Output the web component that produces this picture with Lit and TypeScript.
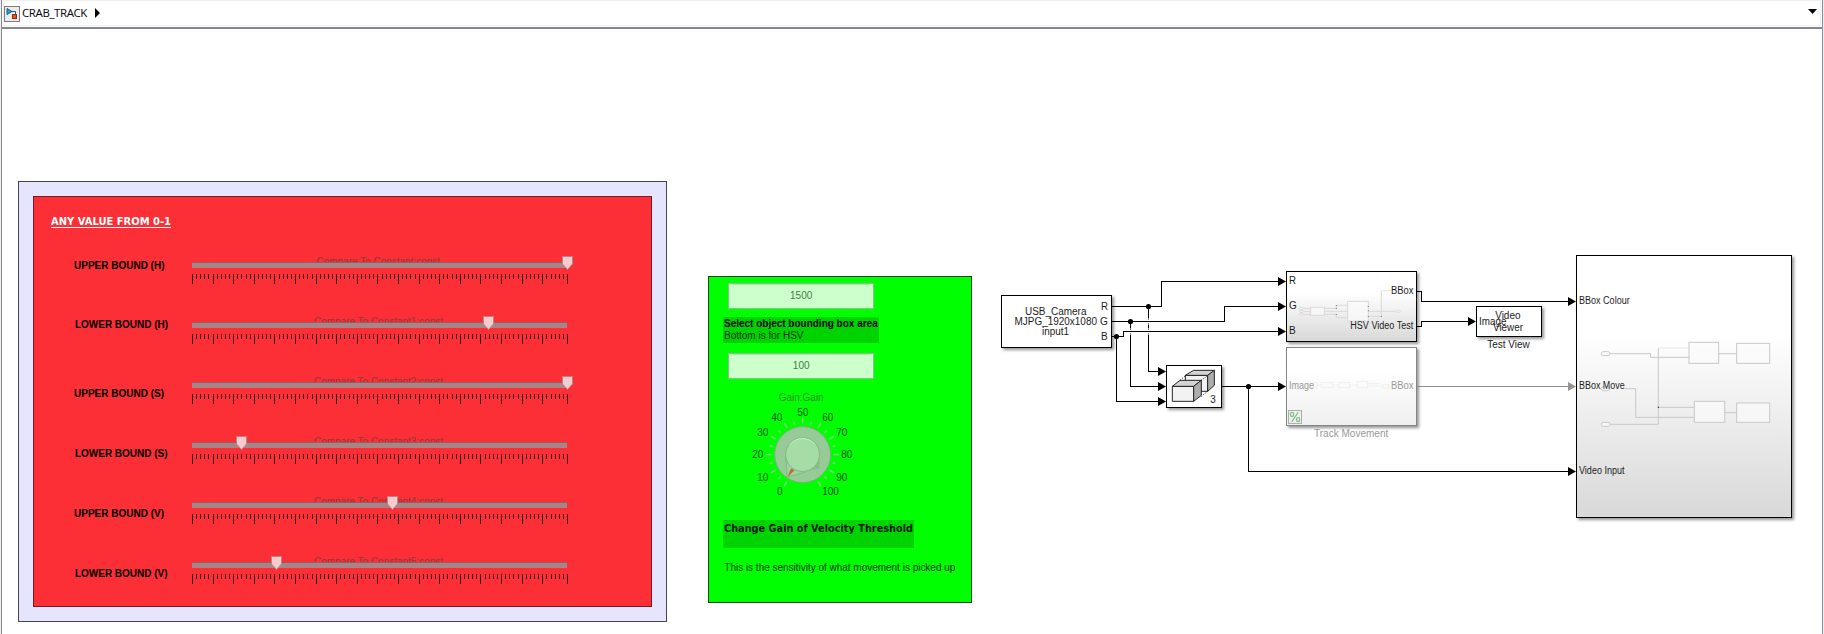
import { LitElement, html, svg, css } from "lit";
import { customElement } from "lit/decorators.js";

interface SliderSpec {
  label: string;
  labelX: number;
  labelW: number;
  labelY: number;
  param: string;
  paramX: number;
  paramW: number;
  thumb: number;
}

const SLIDERS: SliderSpec[] = [
  { label: "UPPER BOUND (H)", labelX: 74, labelW: 90.5, labelY: 269, param: "Compare To Constant:const", paramX: 316.5, paramW: 123.5, thumb: 567.5 },
  { label: "LOWER BOUND (H)", labelX: 75, labelW: 93, labelY: 328, param: "Compare To Constant1:const", paramX: 314, paramW: 129, thumb: 488.5 },
  { label: "UPPER BOUND (S)", labelX: 74, labelW: 90, labelY: 397, param: "Compare To Constant2:const", paramX: 314, paramW: 129, thumb: 567.5 },
  { label: "LOWER BOUND (S)", labelX: 75, labelW: 92.5, labelY: 457, param: "Compare To Constant3:const", paramX: 314, paramW: 129, thumb: 241.5 },
  { label: "UPPER BOUND (V)", labelX: 74, labelW: 90, labelY: 517, param: "Compare To Constant4:const", paramX: 314, paramW: 129, thumb: 392.5 },
  { label: "LOWER BOUND (V)", labelX: 75, labelW: 92.5, labelY: 577, param: "Compare To Constant5:const", paramX: 314, paramW: 129, thumb: 276.5 },
];

/* Knob scale captions: value and centre point on the canvas. */
const KNOB_LABELS: [string, number, number][] = [
  ["0", 779.7, 491.7], ["10", 762.7, 477.7], ["20", 757.7, 454.7], ["30", 762.7, 432.7],
  ["40", 776.7, 417.7], ["50", 802.7, 412.7], ["60", 827.7, 417.7], ["70", 841.7, 432.7],
  ["80", 846.7, 454.7], ["90", 841.7, 477.7], ["100", 830.5, 491.7],
];

const TICKS = Array.from({ length: 92 }, (_, i) => ({
  x: 192 + Math.round((i * 375) / 91),
  long: (i % 5 === 0 && i < 90) || i === 91,
}));

const text = (s: string, x: number, y: number, w: number, cls = "") =>
  svg`<text class=${cls} x=${x} y=${y} textLength=${w} lengthAdjust="spacingAndGlyphs">${s}</text>`;

const arrow = (tip: number, y: number, cls = "head") =>
  svg`<path class=${cls} d="M${tip - 8} ${y - 4.5}L${tip} ${y}L${tip - 8} ${y + 4.5}Z" />`;

@customElement("model-canvas")
export class ModelCanvas extends LitElement {
  static styles = css`
    :host { display: block; }
    svg { display: block; }
    text { font-family: "Liberation Sans", Arial, sans-serif; font-size: 10px; fill: #1c1c1c; }
    .bold { font-weight: 700; fill: #000; }
    .title { font: 700 11px "DejaVu Sans", sans-serif; fill: #fff; }
    .heading { font: 700 11px "DejaVu Sans", sans-serif; fill: #001800; }
    .param { fill: #8d393e; }
    .value { fill: #467c46; text-anchor: middle; }
    .gain { fill: #2c8f2c; }
    .scale { fill: #045204; text-anchor: middle; }
    .note { fill: #003000; }
    .dim { fill: #999; }
    .wire { fill: none; stroke: #000; stroke-width: 1; }
    .wire-dim { fill: none; stroke: #8c8c8c; stroke-width: 1; }
    .head { fill: #000; }
    .head-dim { fill: #949494; }
    .block { fill: #fff; stroke: #000; filter: url(#shadow); }
    .mini { fill: none; stroke: #c8c8c8; stroke-width: 3; }
    .mini-box { fill: #fbfbfb; fill-opacity: 0.7; }
    .light { stroke: #d9d9d9; }
    .faint { stroke: #e6e6e6; }
    .ghost { stroke: #efefef; }
    .cube { stroke: #222; stroke-width: 3; stroke-linejoin: round; }
    .dots { stroke: #111; stroke-width: 3; stroke-dasharray: 3 5; fill: none; }
    .crisp { shape-rendering: crispEdges; }
    .knob-tick { stroke: #8cc88c; stroke-width: 1.4; }
  `;

  private slider(s: SliderSpec, i: number) {
    const dy = i * 60;
    const t = s.thumb;
    return svg`
      ${text(s.label, s.labelX, s.labelY, s.labelW, "bold")}
      <g transform="translate(0 ${dy})">
        ${text(s.param, s.paramX, 265, s.paramW, "param")}
        <g class="crisp">
          <rect x="192" y="262" width="375" height="6" fill="#ab8384" />
          <rect x="192" y="262" width="375" height="1" fill="#8b6265" />
          ${TICKS.map((k) => svg`<rect x=${k.x} y="274" width="1" height=${k.long ? 10 : 5} fill="#300a0c" />`)}
        </g>
        <path d="M${t - 5} 256.5H${t + 5}V264L${t} 269.5L${t - 5} 264Z" fill="#f6cbce" stroke="#b68587" />
      </g>`;
  }

  private knob() {
    const cx = 802.6, cy = 454.6;
    return svg`
      ${Array.from({ length: 21 }, (_, i) => svg`
        <line class="knob-tick" x1=${cx} x2=${cx} y1=${cy - 31} y2=${cy - (i % 2 ? 34 : 36.5)}
          transform="rotate(${i * 15 - 150} ${cx} ${cy})" />`)}
      <circle cx=${cx} cy=${cy} r="28" fill="#96ca96" stroke="#7db07d" />
      <path d="M786 456L787.3 477L819.5 468V455Z" fill="url(#knobShade)" />
      <path d="M785.8 456L787.2 477.2L806 471.8" fill="#9fd29f" stroke="#7fb37f" stroke-width="0.8" />
      <circle cx=${cx} cy=${cy} r="16.9" fill="#a6dca6" stroke="#7fb87f" stroke-width="0.9" />
      <path d="M790 444.5A16 16 0 0 1 815 444.5" fill="none" stroke="#c2f2c2" />
      <path d="M787.2 477.4L791 468.4L794.6 470Z" fill="#bd6a35" />
      ${KNOB_LABELS.map(([s, x, y]) => svg`<text class="scale" x=${x} y=${y + 3.5}>${s}</text>`)}`;
  }

  private wires() {
    return svg`
      <g class="crisp">
        <path class="wire" d="M1112 306.5H1161.5V281.5H1279M1112 321.5H1224.5V306.5H1279M1112 336.5H1123.5V331.5H1279" />
        <path class="wire" d="M1148.5 306.5V318M1148.5 325V328M1148.5 335V371.5H1159M1130.5 321.5V328M1130.5 335V386.5H1159M1116.5 336.5V401.5H1159" />
        <path class="wire" d="M1222 386.5H1279M1248.5 386.5V471.5H1569" />
        <path class="wire" d="M1417 291.5H1421.5V301.5H1569M1417 326.5H1421.5V321.5H1469" />
        <path class="wire-dim" d="M1417 386.5H1569" />
      </g>
      <g class="crisp" stroke="#8a8a8a"><path d="M1148.5 318V320M1148.5 323V325M1148.5 328V330M1148.5 333V335M1130.5 328V330M1130.5 333V335" /></g>
      ${[[1148.5, 306.5], [1130.5, 321.5], [1116.5, 336.5], [1248.5, 386.5]].map(
        ([x, y]) => svg`<circle cx=${x} cy=${y} r="2.6" />`)}
      ${[281.5, 306.5, 331.5, 386.5].map((y) => arrow(1286, y))}
      ${[371.5, 386.5, 401.5].map((y) => arrow(1166, y))}
      ${arrow(1476, 321.5)}
      ${arrow(1576, 301.5)}
      ${arrow(1576, 471.5)}
      ${arrow(1576, 386.5, "head-dim")}`;
  }

  private blocks() {
    return svg`
      <rect class="block" x="1001.5" y="295.5" width="110" height="52" />
      ${text("USB_Camera", 1025, 315, 61.5)}
      ${text("MJPG_1920x1080", 1014.5, 325, 82.5)}
      ${text("input1", 1042, 335, 27)}
      ${text("R", 1101, 310, 7)}
      ${text("G", 1100, 325, 7.8)}
      ${text("B", 1101, 340, 6.7)}

      <rect class="block" x="1166.5" y="365.5" width="55" height="42" />
      <g transform="translate(990 260) scale(0.33333)">
        <path class="cube" fill="#f2f2f2" d="M586 346H653V394H586Z" />
        <path class="cube" fill="#d4d4d4" d="M586 346L611 331H673L653 346Z" />
        <path class="cube" fill="#adadad" d="M653 346L673 331V376L653 394Z" />
        <path class="dots" d="M570 361L586 347M634 361L653 347M634 409L655 392" />
        <path class="cube" fill="#f2f2f2" d="M547 379H611V424H547Z" />
        <path class="cube" fill="#d4d4d4" d="M547 379L570 361H634L611 379Z" />
        <path class="cube" fill="#adadad" d="M611 379L634 361V406L611 424Z" />
      </g>
      ${text("3", 1210.3, 403, 5.5)}

      <rect class="block" x="1286.5" y="271.5" width="130" height="70" style="fill:url(#fade)" />
      <g class="mini light" transform="translate(1270 250) scale(0.33333)">
        <path d="M100 175H122M100 184H122M100 193H122M163 175H199V166H233M163 184H233M163 193H199V203H233M295 184H380M295 199H334V122" />
        <path class="faint" d="M334 122H364" />
        <rect class="mini-box" x="122" y="172" width="41" height="24" />
        <rect class="mini-box" x="233" y="154" width="62" height="59" />
        <rect class="mini-box" x="379" y="181" width="12" height="6" rx="3" />
        <rect class="mini-box" x="88" y="172" width="12" height="6" rx="3" />
        <rect class="mini-box" x="88" y="181" width="12" height="6" rx="3" />
        <rect class="mini-box" x="88" y="190" width="12" height="6" rx="3" />
        <path stroke="#777" d="M199 165V168M199 174V177M199 192V195M295 168V171M295 181V184M295 198V201M334 198V201" />
      </g>
      ${text("R", 1289, 284, 7)}
      ${text("G", 1289, 309, 7.8)}
      ${text("B", 1289, 334, 6.7)}
      ${text("BBox", 1391, 294, 22.5)}
      ${text("HSV Video Test", 1350.3, 329, 63)}

      <rect class="block" x="1476.5" y="306.5" width="65" height="30" />
      ${text("Video", 1495.2, 319, 25.3)}
      ${text("Image", 1479, 325, 27.4)}
      ${text("Viewer", 1493, 331, 30)}
      ${text("Test View", 1487.3, 348, 42.5)}

      <rect class="block" x="1286.5" y="347.5" width="130" height="78" style="fill:url(#fadeDim);stroke:#858585" />
      <g class="mini ghost" transform="translate(1270 250) scale(0.33333)">
        <path d="M143 405H155M188 405H206M239 405H262M293 401H328M293 408H338M356 408H364" />
        <rect x="131" y="398" width="11" height="14" />
        <rect x="155" y="398" width="33" height="15" />
        <rect x="206" y="398" width="33" height="15" />
        <rect x="262" y="395" width="31" height="18" />
        <rect x="338" y="404" width="18" height="10" />
      </g>
      ${text("Image", 1289, 389, 25, "dim")}
      ${text("BBox", 1391, 389, 22.5, "dim")}
      <rect x="1288.5" y="410.5" width="13" height="13" fill="#eaf0ea" stroke="#adadad" />
      <g fill="none" stroke="#7fb57f" stroke-width="1.1">
        <ellipse cx="1292" cy="414.4" rx="1.7" ry="2" />
        <ellipse cx="1298.1" cy="419.6" rx="1.7" ry="2" />
        <path d="M1298.2 412.2L1291.8 421.8" />
      </g>
      ${text("Track Movement", 1314, 437, 74.3, "dim")}

      <rect class="block" x="1576.5" y="255.5" width="215" height="262" style="fill:url(#fade)" />
      <g class="mini" transform="translate(1560 240) scale(0.33333)">
        <path d="M150 341H272V352H387M476 341H530M193 446H227V532H403M494 518H530M150 553H295V325M295 502H403" />
        <path class="faint" d="M295 324H387" />
        <rect class="mini-box" x="387" y="307" width="89" height="63" />
        <rect class="mini-box" x="530" y="310" width="99" height="60" />
        <rect class="mini-box" x="403" y="484" width="91" height="63" />
        <rect class="mini-box" x="530" y="489" width="99" height="58" />
        <rect class="mini-box" x="124" y="335" width="26" height="12" rx="6" />
        <rect class="mini-box" x="124" y="440" width="26" height="12" rx="6" />
        <rect class="mini-box" x="124" y="547" width="26" height="12" rx="6" />
        <path stroke="#222" d="M295 500V504" />
      </g>
      ${text("BBox Colour", 1579, 304, 50.7)}
      ${text("BBox Move", 1579, 389, 45.7)}
      ${text("Video Input", 1579, 474, 45.5)}`;
  }

  render() {
    return html`
      <svg width="1819" height="605" viewBox="2 29 1819 605">
        <defs>
          <filter id="shadow" x="-10%" y="-15%" width="125%" height="135%">
            <feDropShadow dx="2" dy="2" stdDeviation="1.4" flood-color="#000" flood-opacity="0.42" />
          </filter>
          <linearGradient id="fade" x1="0" y1="0" x2="0" y2="1">
            <stop offset="0.3" stop-color="#fff" /><stop offset="1" stop-color="#d8d8d8" />
          </linearGradient>
          <linearGradient id="fadeDim" x1="0" y1="0" x2="0" y2="1">
            <stop offset="0.3" stop-color="#fff" /><stop offset="1" stop-color="#efefef" />
          </linearGradient>
          <linearGradient id="knobShade" x1="0" y1="0" x2="1" y2="0.3">
            <stop offset="0" stop-color="#a2d4a2" /><stop offset="1" stop-color="#8bbd8b" />
          </linearGradient>
        </defs>

        <rect x="18.5" y="181.5" width="648" height="440" fill="#e5e5ff" stroke="#45454d" />
        <rect x="33.5" y="196.5" width="618" height="410" fill="#fb2f35" stroke="#761a1f" />
        ${text("ANY VALUE FROM 0-1", 51, 225, 120, "title")}
        <rect class="crisp" x="51" y="227" width="120" height="1" fill="#fff" />
        ${SLIDERS.map((s, i) => this.slider(s, i))}

        <rect x="708.5" y="276.5" width="263" height="326" fill="#0f0" stroke="#004d00" />
        ${[283.5, 353.5].map((y) => svg`
          <rect x="728.5" y=${y} width="145" height="25" fill="#ccffcc" stroke="#86c486" />
          <rect class="crisp" x="733" y=${y + 0.5} width="136" height="1" fill="#aee2ae" />`)}
        <text class="value" x="801.2" y="299">1500</text>
        <text class="value" x="801.2" y="369">100</text>
        <rect x="723" y="317" width="156" height="26" fill="#00d400" />
        ${text("Select object bounding box area", 724, 327, 153.7, "bold")}
        ${text("Bottom is for HSV", 724, 339, 79.5, "note")}
        ${text("Gain:Gain", 778.7, 401, 45, "gain")}
        ${this.knob()}
        <rect x="723" y="520" width="191" height="28" fill="#00d400" />
        ${text("Change Gain of Velocity Threshold", 724, 532, 189, "heading")}
        ${text("This is the sensitivity of what movement is picked up", 724.3, 571.3, 231, "note")}

        ${this.blocks()}
        ${this.wires()}
      </svg>`;
  }
}

@customElement("app-root")
export class AppRoot extends LitElement {
  static styles = css`
    :host {
      display: flex; flex-direction: column; box-sizing: border-box;
      width: 1824px; height: 634px; overflow: hidden; background: #fff;
      border-left: 1px solid #f0f0f0; border-right: 1px solid #e8edf5;
    }
    .frame {
      flex: 1; display: flex; flex-direction: column; min-height: 0;
      border-left: 1px solid #888a90; border-right: 1px solid #8a919c;
    }
    .bar {
      box-sizing: border-box; height: 26px; margin: 0 1px 1px;
      border: 1px solid #efefef;
      display: flex; align-items: center; padding: 0 3px 4px 0;
    }
    .bar svg { display: block; flex: none; }
    .logo { margin-top: 5px; }
    .name {
      font: 11.4px/16px "Noto Sans", sans-serif; letter-spacing: -0.38px; color: #101018;
      margin-left: 2px; width: 65px; white-space: nowrap; padding-top: 3px;
    }
    .next { margin: 4px 0 0 8px; }
    .menu { margin: 1px 0 0 auto; }
    .rule { height: 2px; background: #84878f; flex: none; }
  `;

  render() {
    return html`
      <div class="frame">
        <div class="bar">
          <svg class="logo" width="16" height="16" viewBox="0 0 16 16">
            <rect x="0.5" y="0.5" width="15" height="15" fill="#ececec" stroke="#7d7d7d" />
            <path d="M3 2.5V8.5L8 5.5Z" fill="#2f9bd8" stroke="#1a5f93" />
            <path d="M8 5.5H11.5V8" fill="none" stroke="#245a80" />
            <rect x="8.5" y="8.5" width="4" height="4" fill="#e8551f" stroke="#9d2a10" />
          </svg>
          <span class="name">CRAB_TRACK</span>
          <svg class="next" width="5" height="10" viewBox="0 0 5 10"><path d="M0 0L5 5L0 10Z" /></svg>
          <svg class="menu" width="9" height="5" viewBox="0 0 9 5"><path d="M0 0H9L4.5 5Z" /></svg>
        </div>
        <div class="rule"></div>
        <model-canvas></model-canvas>
      </div>`;
  }
}
